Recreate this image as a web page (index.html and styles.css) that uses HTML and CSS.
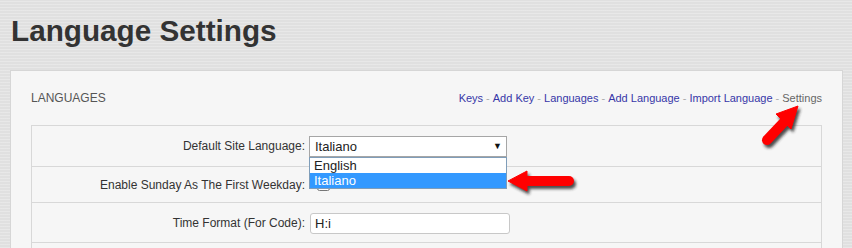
FILE: index.html
```html
<!DOCTYPE html>
<html>

<head>
    <link rel="stylesheet" href="styles.css">
    <title>Language Settings</title>
</head>

<body>
    <h1 class="page-title">Language Settings</h1>

    <div class="panel">
        <div class="panel-head">
            <span class="panel-title">LANGUAGES</span>
            <div class="panel-links">
                <a href="#">Keys</a><span class="sep">-</span><a href="#">Add Key</a><span class="sep">-</span><a href="#">Languages</a><span class="sep">-</span><a href="#">Add Language</a><span class="sep">-</span><a href="#">Import Language</a><span class="sep">-</span><a href="#" class="current">Settings</a>
            </div>
        </div>

        <div class="settings-table">
            <div class="form-row row-lang">
                <label class="form-label">Default Site Language:</label>
                <div class="form-field field-select">
                    <div class="fake-select">
                        <span>Italiano</span>
                        <span class="caret">&#9660;</span>
                    </div>
                    <ul class="select-list">
                        <li>English</li>
                        <li class="selected">Italiano</li>
                    </ul>
                </div>
            </div>
            <div class="form-row row-check">
                <label class="form-label">Enable Sunday As The First Weekday:</label>
                <div class="form-field">
                    <input type="checkbox" class="check">
                </div>
            </div>
            <div class="form-row row-text">
                <label class="form-label">Time Format (For Code):</label>
                <div class="form-field">
                    <input type="text" class="text-input" value="H:i">
                </div>
            </div>
            <div class="form-row row-empty">
                <label class="form-label"></label>
                <div class="form-field"></div>
            </div>
        </div>
    </div>

    <!-- red arrows drawn over the screenshot -->
    <svg class="arrows" width="852" height="248" viewBox="0 0 852 248">
        <defs>
            <filter id="shadow" x="-20%" y="-20%" width="140%" height="140%">
                <feGaussianBlur stdDeviation="1.5"/>
            </filter>
        </defs>
        <g transform="translate(2,3)" fill="#222" stroke="#222" filter="url(#shadow)" opacity="0.8">
            <line x1="524" y1="181" x2="569" y2="181" stroke-width="10" stroke-linecap="round"/>
            <path d="M508 181 L527 171 L527 191 Z"/>
            <line x1="767" y1="140" x2="785" y2="121" stroke-width="10" stroke-linecap="round"/>
            <path d="M798 106 L776 114 L791 129 Z"/>
        </g>
        <g fill="#f00" stroke="#f00">
            <line x1="524" y1="181" x2="569" y2="181" stroke-width="10" stroke-linecap="round"/>
            <path d="M508 181 L527 171 L527 191 Z" stroke-width="1" stroke-linejoin="round"/>
            <line x1="767" y1="140" x2="785" y2="121" stroke-width="10" stroke-linecap="round"/>
            <path d="M798 106 L776 114 L791 129 Z" stroke-width="1" stroke-linejoin="round"/>
        </g>
    </svg>
</body>

</html>
```

FILE: styles.css
```css
body {
    font-family: "Liberation Sans", Arial, sans-serif;
    margin: 0;
    padding: 0 9px 0 10px;
    background-color: #e0e0e0;
    background-image: repeating-linear-gradient(0deg, rgba(255, 255, 255, 0.25) 0, rgba(255, 255, 255, 0.25) 1px, transparent 1px, transparent 3px);
    color: #333;
    position: relative;
    height: 248px;
    overflow: hidden;
}

.page-title {
    margin: 0;
    padding: 13px 0 0 1px;
    height: 70px;
    box-sizing: border-box;
    font-size: 29.7px;
    line-height: 36px;
    font-weight: bold;
    color: #333;
}

.panel {
    background-color: #f6f6f6;
    border: 1px solid #d6d6d6;
    padding: 20px 20px 0 20px;
    height: 300px;
}

.panel-head {
    display: flex;
    justify-content: space-between;
    align-items: center;
    height: 14px;
    margin-bottom: 20px;
    font-size: 12px;
}

.panel-title {
    color: #555;
}

.panel-links {
    font-size: 11px;
}

.panel-links a {
    color: #3636a8;
    text-decoration: none;
}

.panel-links a.current {
    color: #666;
}

.panel-links .sep {
    color: #aaa;
    margin: 0 3px;
}

.settings-table {
    border: 1px solid #d8d8d8;
    border-bottom: none;
}

.form-row {
    display: flex;
    align-items: center;
    border-bottom: 1px solid #d8d8d8;
    font-size: 12px;
}

.row-lang {
    height: 40px;
}

.row-check {
    height: 35px;
}

.row-text {
    height: 38px;
    padding-top: 1px;
}

.row-empty {
    height: 40px;
}

.form-label {
    width: 273px;
    padding-right: 4px;
    text-align: right;
    color: #333;
}

.form-field {
    flex: 1;
}

.field-select {
    position: relative;
}

.fake-select {
    display: flex;
    justify-content: space-between;
    align-items: center;
    width: 198px;
    height: 21px;
    box-sizing: border-box;
    border: 1px solid #a6a6a6;
    background-color: #fff;
    padding: 0 4px 0 5px;
    font-size: 13px;
    color: #222;
}

.caret {
    font-size: 9px;
    color: #111;
}

.select-list {
    position: absolute;
    left: 0;
    top: 21px;
    width: 198px;
    box-sizing: border-box;
    margin: 0;
    padding: 0;
    list-style: none;
    border: 1px solid #7f9db9;
    background-color: #fff;
    z-index: 2;
    font-size: 13px;
}

.select-list li {
    height: 15px;
    line-height: 15px;
    padding-left: 4px;
    color: #222;
}

.select-list li.selected {
    background-color: #3399ff;
    color: #fff;
}

.check {
    margin: 2px 0 0 8px;
    width: 13px;
    height: 13px;
}

.text-input {
    width: 200px;
    height: 21px;
    box-sizing: border-box;
    margin-left: 1px;
    padding: 0 4px;
    border: 1px solid #c8c8c8;
    border-radius: 3px;
    font-family: "Liberation Sans", Arial, sans-serif;
    font-size: 13px;
    color: #222;
}

.arrows {
    position: absolute;
    left: 0;
    top: 0;
    pointer-events: none;
    z-index: 5;
}
```
